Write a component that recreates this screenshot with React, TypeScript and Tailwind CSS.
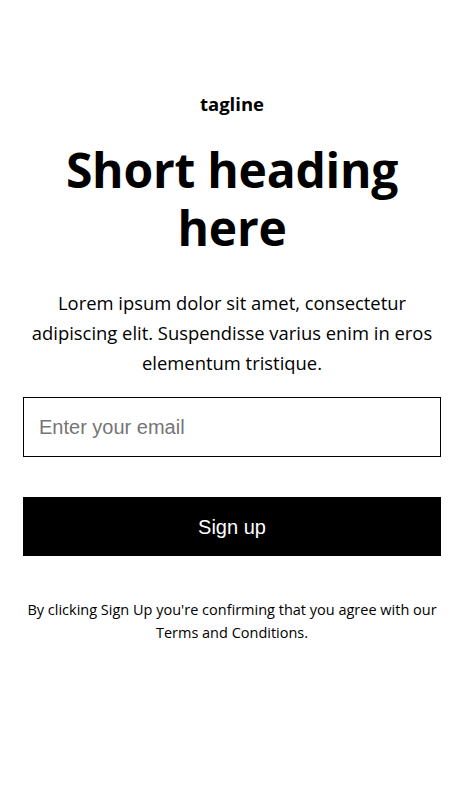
import React from "react";

export default function App() {
  const font = { fontFamily: '"Open Sans", "Noto Sans", sans-serif' };
  return (
    <div className="min-h-[799px] w-full bg-white pl-[23px] pr-[25px] pt-[92px] text-black" style={font}>
      <div className="flex flex-col items-center text-center">
        <p className="text-[18.5px] font-bold leading-[24px]">tagline</p>
        <h1 className="mt-[25px] text-[48px] font-bold leading-[58px] tracking-[-0.25px]">
          Short heading here
        </h1>
        <p className="mt-[31px] text-[18.4px] leading-[30px]">
          Lorem ipsum dolor sit amet, consectetur adipiscing elit. Suspendisse varius enim in eros elementum tristique.
        </p>
      </div>
      <div className="mt-[19px] flex flex-col">
        <input
          type="email"
          placeholder="Enter your email"
          className="h-[60px] w-full border border-black bg-white px-[15px] text-[20px] text-black outline-none placeholder:text-[#757575]"
          style={{ fontFamily: '"Liberation Sans", Arial, sans-serif' }}
        />
        <button
          className="mt-[40px] h-[59px] w-full bg-black text-[20px] text-white"
          style={{ fontFamily: '"Liberation Sans", Arial, sans-serif' }}
        >
          Sign up
        </button>
        <p className="mt-[42px] text-center text-[14.5px] leading-[23px]">
          By clicking Sign Up you're confirming that you agree with our Terms and Conditions.
        </p>
      </div>
    </div>
  );
}
